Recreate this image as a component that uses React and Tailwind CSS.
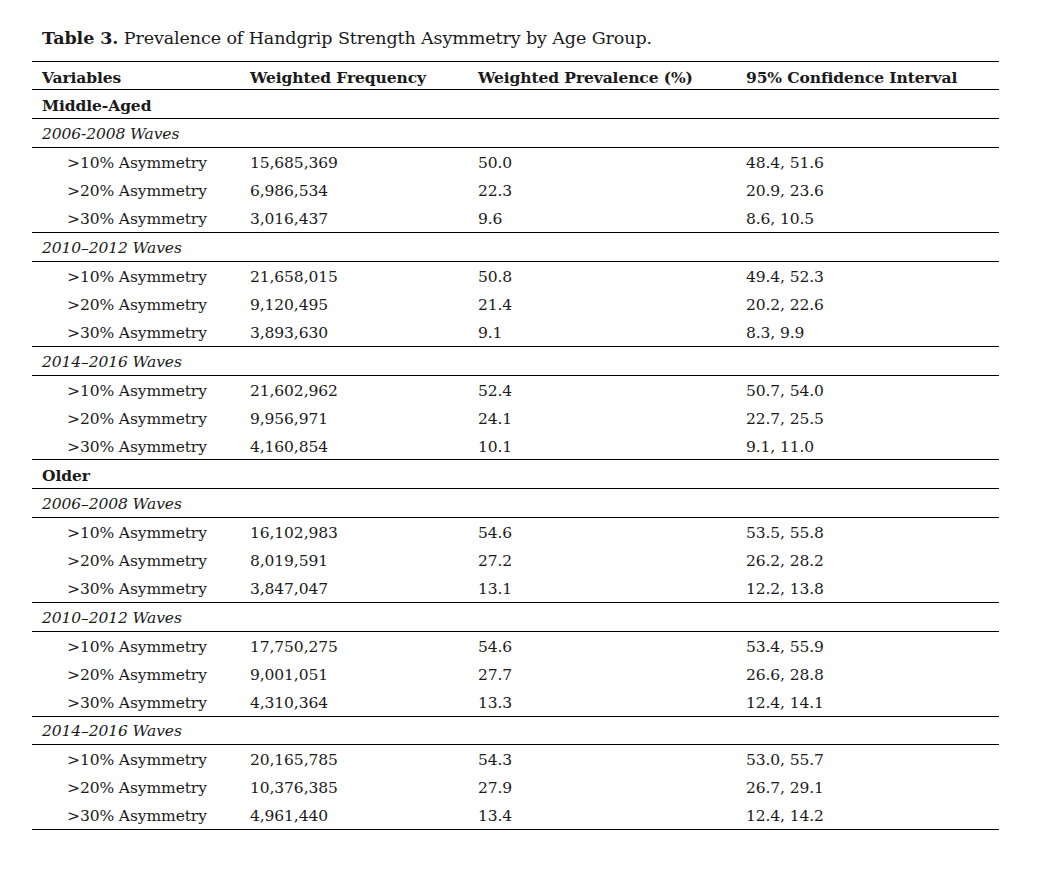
import React from 'react';

const groups = [
  {
    name: 'Middle-Aged',
    waves: [
      {
        label: '2006-2008 Waves',
        rows: [
          ['>10% Asymmetry', '15,685,369', '50.0', '48.4, 51.6'],
          ['>20% Asymmetry', '6,986,534', '22.3', '20.9, 23.6'],
          ['>30% Asymmetry', '3,016,437', '9.6', '8.6, 10.5'],
        ],
      },
      {
        label: '2010–2012 Waves',
        rows: [
          ['>10% Asymmetry', '21,658,015', '50.8', '49.4, 52.3'],
          ['>20% Asymmetry', '9,120,495', '21.4', '20.2, 22.6'],
          ['>30% Asymmetry', '3,893,630', '9.1', '8.3, 9.9'],
        ],
      },
      {
        label: '2014–2016 Waves',
        short: true, // block is a pixel shorter in the source
        rows: [
          ['>10% Asymmetry', '21,602,962', '52.4', '50.7, 54.0'],
          ['>20% Asymmetry', '9,956,971', '24.1', '22.7, 25.5'],
          ['>30% Asymmetry', '4,160,854', '10.1', '9.1, 11.0'],
        ],
      },
    ],
  },
  {
    name: 'Older',
    waves: [
      {
        label: '2006–2008 Waves',
        rows: [
          ['>10% Asymmetry', '16,102,983', '54.6', '53.5, 55.8'],
          ['>20% Asymmetry', '8,019,591', '27.2', '26.2, 28.2'],
          ['>30% Asymmetry', '3,847,047', '13.1', '12.2, 13.8'],
        ],
      },
      {
        label: '2010–2012 Waves',
        rows: [
          ['>10% Asymmetry', '17,750,275', '54.6', '53.4, 55.9'],
          ['>20% Asymmetry', '9,001,051', '27.7', '26.6, 28.8'],
          ['>30% Asymmetry', '4,310,364', '13.3', '12.4, 14.1'],
        ],
      },
      {
        label: '2014–2016 Waves',
        shortLabel: true,
        rows: [
          ['>10% Asymmetry', '20,165,785', '54.3', '53.0, 55.7'],
          ['>20% Asymmetry', '10,376,385', '27.9', '26.7, 29.1'],
          ['>30% Asymmetry', '4,961,440', '13.4', '12.4, 14.2'],
        ],
      },
    ],
  },
];

const cols = 'grid grid-cols-[208px_228px_268px_263px]';

const App = () => {
  return (
    <div className="min-h-[879px] w-[1038px] bg-white text-[#1a1a1a] font-['DejaVu_Serif',serif] text-[15.5px] tracking-[-0.1px]">
      <div className="pl-[32px] pt-[24px]">
        <h1 className="pl-[10px] h-[37px] text-[17.5px] leading-[28px] tracking-[-0.1px]">
          <span className="font-bold">Table 3.</span> Prevalence of Handgrip Strength Asymmetry by Age Group.
        </h1>

        <div className="w-[967px] border-t border-black">
          {/* header */}
          <div className={`${cols} h-[28px] items-center border-b border-black font-bold pt-[4px]`}>
            <div className="pl-[10px]">Variables</div>
            <div className="pl-[10px]">Weighted Frequency</div>
            <div className="pl-[10px]">Weighted Prevalence (%)</div>
            <div className="pl-[10px]">95% Confidence Interval</div>
          </div>

          {groups.map(group => (
            <div key={group.name}>
              <div className="h-[29px] flex items-center border-b border-black font-bold pl-[10px] pt-[3px]">
                {group.name}
              </div>
              {group.waves.map(wave => (
                <div key={wave.label}>
                  <div className={`${wave.shortLabel ? 'h-[28px]' : 'h-[29px]'} flex items-center border-b border-black italic pl-[10px] pt-[3px]`}>
                    {wave.label}
                  </div>
                  {wave.rows.map((row, i) => {
                    const last = i === wave.rows.length - 1;
                    const h = last ? (wave.short ? 'h-[28px] border-b border-black' : 'h-[29px] border-b border-black') : 'h-[28px]';
                    return (
                      <div key={row[0]} className={`${cols} items-center pt-[4px] ${h}`}>
                        <div className="pl-[35px]">{row[0]}</div>
                        <div className="pl-[10px]">{row[1]}</div>
                        <div className="pl-[10px]">{row[2]}</div>
                        <div className="pl-[10px]">{row[3]}</div>
                      </div>
                    );
                  })}
                </div>
              ))}
            </div>
          ))}
        </div>
      </div>
    </div>
  );
};

export default App;
